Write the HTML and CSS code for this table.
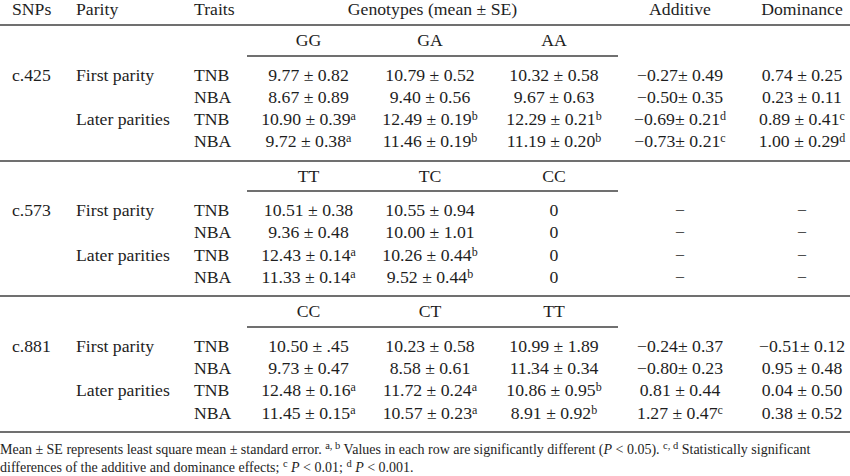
FILE: index.html
```html
<!DOCTYPE html>
<html>
<head>
<meta charset="utf-8">
<link rel="stylesheet" href="styles.css">
</head>
<body>
<div class="page">
<table class="tbl">
  <colgroup>
    <col class="c-snp"><col class="c-par"><col class="c-tr"><col class="c-g1"><col class="c-g2"><col class="c-g3"><col class="c-add"><col class="c-dom">
  </colgroup>
  <thead>
    <tr class="head">
      <th class="l snp">SNPs</th>
      <th class="l">Parity</th>
      <th class="l">Traits</th>
      <th colspan="3">Genotypes (mean ± SE)</th>
      <th>Additive</th>
      <th class="dom">Dominance</th>
    </tr>
  </thead>
  <tbody>
    <tr class="sub"><td></td><td></td><td></td><td class="ul">GG</td><td class="ul">GA</td><td class="ul">AA</td><td></td><td></td></tr>
    <tr class="first"><td class="l snp">c.425</td><td class="l">First parity</td><td class="l">TNB</td><td>9.77 ± 0.82</td><td>10.79 ± 0.52</td><td>10.32 ± 0.58</td><td>−0.27± 0.49</td><td class="dom">0.74 ± 0.25</td></tr>
    <tr><td></td><td></td><td class="l">NBA</td><td>8.67 ± 0.89</td><td>9.40 ± 0.56</td><td>9.67 ± 0.63</td><td>−0.50± 0.35</td><td class="dom">0.23 ± 0.11</td></tr>
    <tr><td></td><td class="l">Later parities</td><td class="l">TNB</td><td>10.90 ± 0.39<sup>a</sup></td><td>12.49 ± 0.19<sup>b</sup></td><td>12.29 ± 0.21<sup>b</sup></td><td>−0.69± 0.21<sup>d</sup></td><td class="dom">0.89 ± 0.41<sup>c</sup></td></tr>
    <tr class="last"><td></td><td></td><td class="l">NBA</td><td>9.72 ± 0.38<sup>a</sup></td><td>11.46 ± 0.19<sup>b</sup></td><td>11.19 ± 0.20<sup>b</sup></td><td>−0.73± 0.21<sup>c</sup></td><td class="dom">1.00 ± 0.29<sup>d</sup></td></tr>
  </tbody>
  <tbody>
    <tr class="sub"><td></td><td></td><td></td><td class="ul">TT</td><td class="ul">TC</td><td class="ul">CC</td><td></td><td></td></tr>
    <tr class="first"><td class="l snp">c.573</td><td class="l">First parity</td><td class="l">TNB</td><td>10.51 ± 0.38</td><td>10.55 ± 0.94</td><td>0</td><td>−</td><td class="dom">−</td></tr>
    <tr><td></td><td></td><td class="l">NBA</td><td>9.36 ± 0.48</td><td>10.00 ± 1.01</td><td>0</td><td>−</td><td class="dom">−</td></tr>
    <tr><td></td><td class="l">Later parities</td><td class="l">TNB</td><td>12.43 ± 0.14<sup>a</sup></td><td>10.26 ± 0.44<sup>b</sup></td><td>0</td><td>−</td><td class="dom">−</td></tr>
    <tr class="last"><td></td><td></td><td class="l">NBA</td><td>11.33 ± 0.14<sup>a</sup></td><td>9.52 ± 0.44<sup>b</sup></td><td>0</td><td>−</td><td class="dom">−</td></tr>
  </tbody>
  <tbody>
    <tr class="sub"><td></td><td></td><td></td><td class="ul">CC</td><td class="ul">CT</td><td class="ul">TT</td><td></td><td></td></tr>
    <tr class="first"><td class="l snp">c.881</td><td class="l">First parity</td><td class="l">TNB</td><td>10.50 ± .45</td><td>10.23 ± 0.58</td><td>10.99 ± 1.89</td><td>−0.24± 0.37</td><td class="dom">−0.51± 0.12</td></tr>
    <tr><td></td><td></td><td class="l">NBA</td><td>9.73 ± 0.47</td><td>8.58 ± 0.61</td><td>11.34 ± 0.34</td><td>−0.80± 0.23</td><td class="dom">0.95 ± 0.48</td></tr>
    <tr><td></td><td class="l">Later parities</td><td class="l">TNB</td><td>12.48 ± 0.16<sup>a</sup></td><td>11.72 ± 0.24<sup>a</sup></td><td>10.86 ± 0.95<sup>b</sup></td><td>0.81 ± 0.44</td><td class="dom">0.04 ± 0.50</td></tr>
    <tr class="last"><td></td><td></td><td class="l">NBA</td><td>11.45 ± 0.15<sup>a</sup></td><td>10.57 ± 0.23<sup>a</sup></td><td>8.91 ± 0.92<sup>b</sup></td><td>1.27 ± 0.47<sup>c</sup></td><td class="dom">0.38 ± 0.52</td></tr>
  </tbody>
</table>
<p class="note">Mean ± SE represents least square mean ± standard error. <sup>a, b</sup> Values in each row are significantly different (<i>P</i> &lt; 0.05). <sup>c, d</sup> Statistically significant<br>differences of the additive and dominance effects; <sup>c</sup> <i>P</i> &lt; 0.01; <sup>d</sup> <i>P</i> &lt; 0.001.</p>
</div>
</body>
</html>
```
FILE: styles.css
```css
html, body {
  margin: 0;
  padding: 0;
  background: #fff;
}
.page {
  width: 850px;
  height: 476px;
  overflow: hidden;
  font-family: "Liberation Serif", "Times New Roman", serif;
  color: #1e1e1e;
}
.tbl {
  width: 850px;
  table-layout: fixed;
  border-collapse: separate;
  border-spacing: 0;
  font-size: 17.7px;
}
.c-snp { width: 76px; }
.c-par { width: 118px; }
.c-tr { width: 53px; }
.c-g1 { width: 123px; }
.c-g2 { width: 120px; }
.c-g3 { width: 128px; }
.c-add { width: 124px; }
.c-dom { width: 108px; }

.tbl th, .tbl td {
  padding: 0;
  text-align: center;
  font-weight: normal;
  white-space: nowrap;
  vertical-align: middle;
}
.tbl .l { text-align: left; }
.tbl .snp { padding-left: 12px; }
.tbl .dom { padding-left: 12px; }

.head th {
  line-height: 19px;
  padding-bottom: 5px;
  border-bottom: 2px solid #707070;
}
.sub td.ul {
  border-bottom: 2px solid #707070;
}
.tbl tbody td {
  line-height: 22.3px;
}
.tbl tbody .sub td {
  line-height: 28.5px;
}
.first td { padding-top: 7px; }
.last td {
  padding-bottom: 7px;
  border-bottom: 2px solid #707070;
}
sup {
  font-size: 0.68em;
  line-height: 0;
  vertical-align: 0.45em;
}
.note {
  margin: 8px 0 0 0;
  font-size: 14px;
  line-height: 18px;
  white-space: nowrap;
}
.note sup {
  font-size: 0.75em;
  vertical-align: 0.45em;
}
```
